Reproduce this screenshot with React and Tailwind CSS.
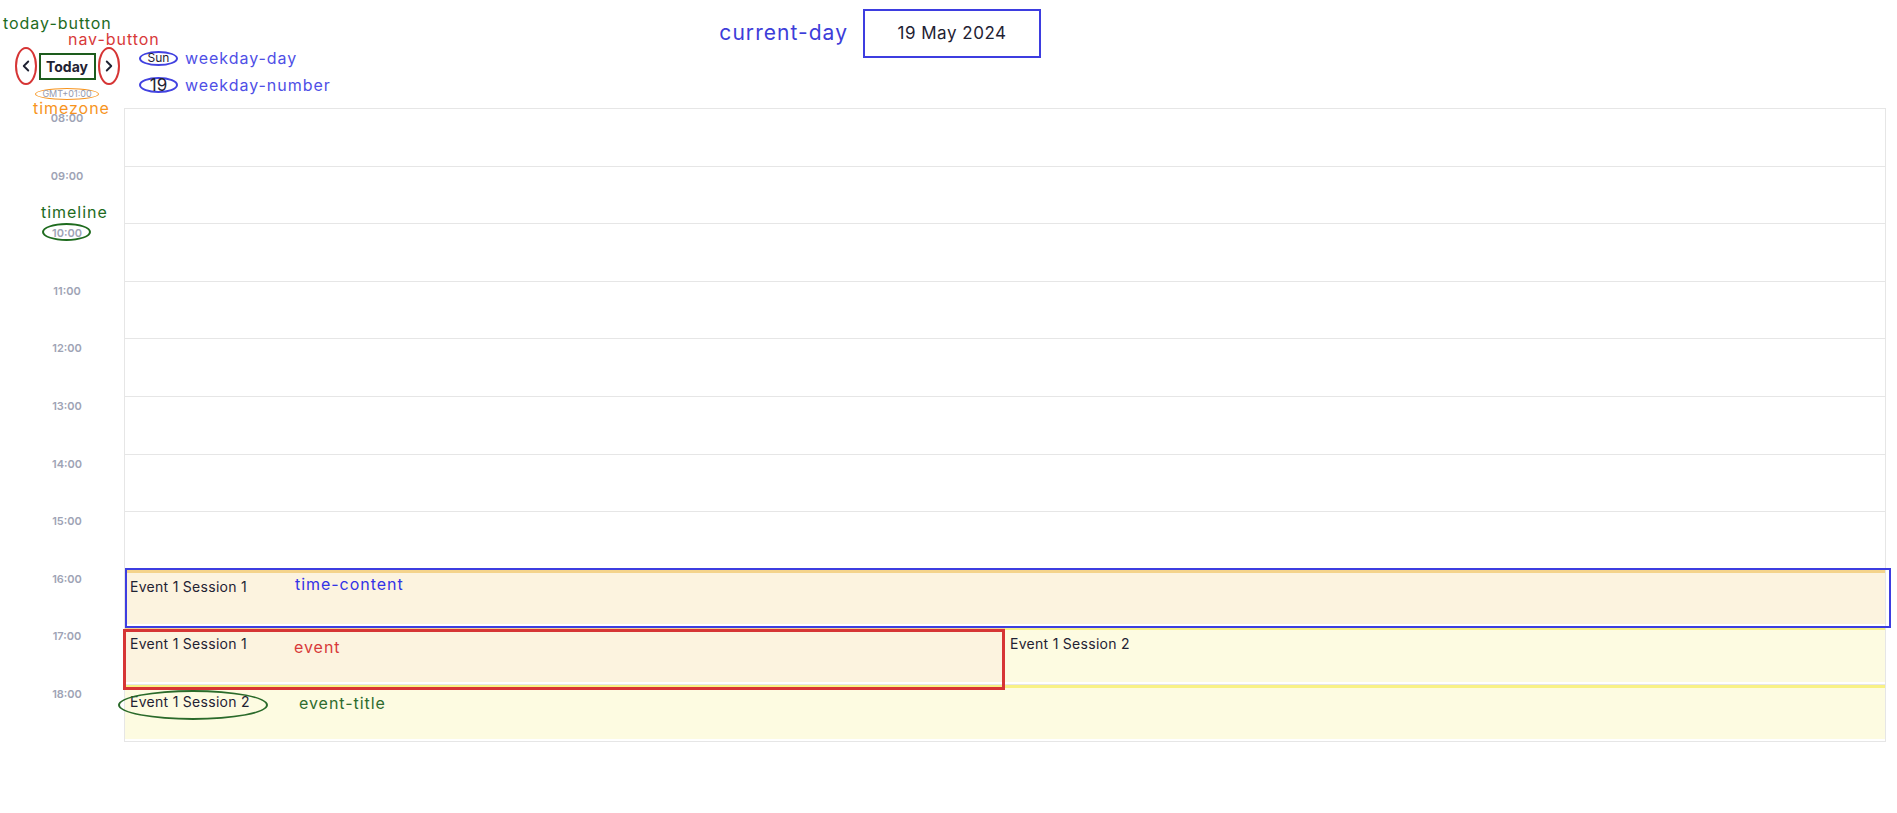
import { ChevronLeft, ChevronRight } from 'lucide-react';

const hours = ['08:00', '09:00', '10:00', '11:00', '12:00', '13:00', '14:00', '15:00', '16:00', '17:00', '18:00'];

function Event({ title, tone }) {
  const cls =
    tone === 'cream'
      ? 'border-[#f4d38b] bg-[#fcf3df]'
      : 'border-[#f8f185] bg-[#fdfbe1]';
  return (
    <div className={`mb-[2px] flex-1 border-t-[3px] px-[5px] pt-[4px] text-[14px] leading-[20px] tracking-[0.02em] text-[#1f2233] ${cls}`}>
      {title}
    </div>
  );
}

function Events({ hour }) {
  if (hour === '16:00') return <Event title="Event 1 Session 1" tone="cream" />;
  if (hour === '17:00')
    return (
      <>
        <Event title="Event 1 Session 1" tone="cream" />
        <Event title="Event 1 Session 2" tone="yellow" />
      </>
    );
  if (hour === '18:00') return <Event title="Event 1 Session 2" tone="yellow" />;
  return null;
}

export default function App() {
  return (
    <div className="relative h-[813px] w-full overflow-hidden bg-white pr-[11px] font-['Inter',sans-serif]">
      {/* Header */}
      <div className="flex h-[108px]">
        <div className="flex w-[134px] flex-col items-center pt-[47px]">
          <div className="flex items-center">
            <button className="flex h-[38px] w-[22px] items-center justify-center rounded-[50%] border-2 border-[#d63535] text-[#1f2233]">
              <ChevronLeft size={18} strokeWidth={2.5} />
            </button>
            <button className="mx-[2px] flex h-[27px] w-[57px] items-center justify-center border-2 border-[#1d5c1d] text-[14px] font-bold text-[#1f2233]">
              Today
            </button>
            <button className="flex h-[38px] w-[22px] items-center justify-center rounded-[50%] border-2 border-[#d63535] text-[#1f2233]">
              <ChevronRight size={18} strokeWidth={2.5} />
            </button>
          </div>
          <span className="mt-[3px] flex h-[12px] w-[64px] items-center justify-center rounded-[50%] border-[1.5px] border-[#f7941d] text-[9px] leading-[10px] text-[#959aae]">
            GMT+01:00
          </span>
        </div>

        <div className="ml-[5px] flex w-[200px] flex-col pt-[48px]">
          <div className="flex items-center gap-[7px]">
            <span className="flex h-[15px] w-[39px] items-center justify-center rounded-[50%] border-2 border-[#4242e0] text-[12px] leading-[12px] text-[#1f2233]">
              Sun
            </span>
            <span className="text-[16px] leading-[20px] tracking-[0.06em] text-[#4f4fe6]">weekday-day</span>
          </div>
          <div className="mt-[7px] flex items-center gap-[7px]">
            <span className="flex h-[16px] w-[39px] items-center justify-center rounded-[50%] border-2 border-[#4242e0] text-[17px] leading-[16px] text-[#1f2233]">
              19
            </span>
            <span className="text-[16px] leading-[20px] tracking-[0.06em] text-[#4f4fe6]">weekday-number</span>
          </div>
        </div>

        <div className="flex flex-1 items-start">
          <div className="flex w-[524px] justify-end pr-[15px] pt-[20px]">
            <span className="text-[21px] leading-[26px] tracking-[0.05em] text-[#3d3dd9]">current-day</span>
          </div>
          <div className="mt-[9px] flex h-[49px] w-[178px] items-center justify-center border-2 border-[#3d3de0] text-[17px] tracking-[0.03em] text-[#1f2233]">
            19 May 2024
          </div>
        </div>
      </div>

      {/* Timetable */}
      <div className="flex flex-col">
        {hours.map((h, i) => (
          <div key={h} className="flex h-[57.6px]">
            <div className="w-[124px] pl-[10px] pt-[3px] text-center text-[11px] font-semibold leading-[14px] text-[#9ea3b5]">
              {h}
            </div>
            <div
              className={`flex flex-1 border-x border-t border-[#e6e6e6] ${i === hours.length - 1 ? 'border-b' : ''}`}
            >
              <Events hour={h} />
            </div>
          </div>
        ))}
      </div>

      {/* Annotations */}
      <span className="absolute left-[3px] top-[13px] text-[16px] leading-[20px] tracking-[0.06em] text-[#1e6b1e]">today-button</span>
      <span className="absolute left-[68px] top-[29px] text-[16px] leading-[20px] tracking-[0.06em] text-[#d83a3a]">nav-button</span>
      <span className="absolute left-[33px] top-[100px] text-[16px] leading-[16px] tracking-[0.06em] text-[#f7941d]">timezone</span>
      <span className="absolute left-[41px] top-[202px] text-[16px] leading-[20px] tracking-[0.06em] text-[#1e6b1e]">timeline</span>
      <div className="absolute left-[42px] top-[223px] h-[18px] w-[49px] rounded-[50%] border-2 border-[#1e6b1e]" />

      <div className="absolute left-[125px] top-[568px] h-[60px] w-[1766px] border-2 border-[#3d3de0]" />
      <span className="absolute left-[295px] top-[574px] text-[16px] leading-[20px] tracking-[0.06em] text-[#3333e6]">time-content</span>

      <div className="absolute left-[123px] top-[629px] h-[61px] w-[882px] border-[3px] border-[#d63535]" />
      <span className="absolute left-[294px] top-[637px] text-[16px] leading-[20px] tracking-[0.06em] text-[#d83a3a]">event</span>

      <div className="absolute left-[118px] top-[690px] h-[30px] w-[150px] rounded-[50%] border-2 border-[#2a6a2a]" />
      <span className="absolute left-[299px] top-[693px] text-[16px] leading-[20px] tracking-[0.06em] text-[#2e6b2e]">event-title</span>
    </div>
  );
}
